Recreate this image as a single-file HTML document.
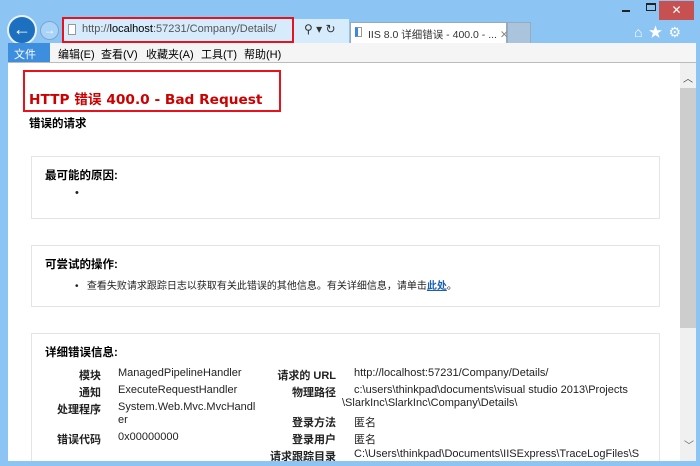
<!DOCTYPE html>
<html><head><meta charset="utf-8"><style>
*{margin:0;padding:0;box-sizing:border-box}
body{width:700px;height:466px;overflow:hidden;background:#8cc4f3;font-family:"Liberation Sans","Noto Sans CJK SC",sans-serif;position:relative;font-size:11px;color:#000}
.abs{position:absolute}
.content{position:absolute;left:8px;top:63px;width:672px;height:398px;background:#fff;overflow:hidden}
.menu{position:absolute;left:8px;top:43px;width:688px;height:20px;background:#f5f5f5;border-bottom:1px solid #bbb;font-size:11px}
.menu span{position:absolute;top:3px}
.box{position:absolute;left:23px;width:629px;border:1px solid #e4e4e4;background:#fff}
.box h3{position:absolute;left:13px;font-size:11.5px;font-weight:bold}
.t{position:absolute;font-size:11px;white-space:nowrap;color:#222}
.b{font-weight:bold;text-align:right}
</style></head><body>
<div class="abs" style="left:622px;top:10px;width:8px;height:2px;background:#222"></div>
<div class="abs" style="left:646px;top:3px;width:10px;height:8px;border:1px solid #222;border-top-width:2px"></div>
<div class="abs" style="left:659px;top:1px;width:35px;height:19px;background:#c75050;color:#fff;text-align:center;font-size:12px;line-height:18px">✕</div>
<div class="abs" style="left:7px;top:15px;width:30px;height:30px;border-radius:50%;background:#1d6fc0;border:2px solid #e8f2fb;color:#fff;font-size:18px;line-height:24px;text-align:center;font-weight:bold">←</div>
<div class="abs" style="left:40px;top:21px;width:19px;height:19px;border-radius:50%;border:1px solid #7aa6d0;background:#a9d3f7;color:#fff;font-size:12px;line-height:16px;text-align:center">→</div>
<div class="abs" style="left:62px;top:17px;width:232px;height:26px;border:2px solid #e8111c;background:#d6ebfc"></div>
<div class="abs" style="left:68px;top:24px;width:8px;height:11px;border:1px solid #999;background:#fff"></div>
<div class="abs" style="left:82px;top:23px;font-size:11px;color:#555">http://<span style="color:#000">localhost</span>:57231/Company/Details/</div>
<div class="abs" style="left:294px;top:19px;width:55px;height:24px;background:#d6ebfc"></div>
<div class="abs" style="left:304px;top:22px;font-size:12px;color:#333">⚲ ▾ ↻</div>
<div class="abs" style="left:350px;top:22px;width:157px;height:22px;background:#fff;border:1px solid #9ab"></div>
<div class="abs" style="left:355px;top:27px;width:7px;height:10px;border:1px solid #999;border-left:3px solid #3a8ad8"></div>
<div class="abs" style="left:368px;top:27px;font-size:10.5px;color:#333">IIS 8.0 详细错误 - 400.0 - ... <span style="color:#888">✕</span></div>
<div class="abs" style="left:507px;top:22px;width:24px;height:22px;background:#a9c4dc;border:1px solid #9ab"></div>
<div class="abs" style="left:634px;top:22px;font-size:14px;color:#fff;letter-spacing:6px">⌂★⚙</div>
<div class="menu">
<span style="left:0;top:0;width:42px;height:19px;background:#3d8ede;color:#fff;padding:3px 0 0 6px">文件(F)</span>
<span style="left:50px">编辑(E)</span><span style="left:93px">查看(V)</span><span style="left:138px">收藏夹(A)</span><span style="left:193px">工具(T)</span><span style="left:236px">帮助(H)</span>
</div>
<div class="content">
<div class="abs" style="left:15px;top:7px;width:258px;height:42px;border:2px solid #e8111c"></div>
<div class="abs" style="left:21px;top:25px;font-family:'DejaVu Sans','Noto Sans CJK SC',sans-serif;font-weight:bold;font-size:13.7px;color:#cc0000">HTTP 错误 400.0 - Bad Request</div>
<div class="abs" style="left:21px;top:52px;font-weight:bold;font-size:11.5px">错误的请求</div>
<div class="box" style="top:93px;height:63px"><h3 style="top:10px">最可能的原因:</h3><div class="t" style="left:43px;top:30px">•</div></div>
<div class="box" style="top:182px;height:62px"><h3 style="top:10px">可尝试的操作:</h3><div class="t" style="left:43px;top:31px;font-size:10px">•&nbsp;&nbsp; 查看失败请求跟踪日志以获取有关此错误的其他信息。有关详细信息，请单击<b style="color:#1a5fb4;text-decoration:underline">此处</b>。</div></div>
<div class="box" style="top:270px;height:140px"><h3 style="top:10px">详细错误信息:</h3>
<div class="t b" style="left:20px;width:49px;top:33px">模块</div><div class="t" style="left:86px;top:33px">ManagedPipelineHandler</div>
<div class="t b" style="left:20px;width:49px;top:50px">通知</div><div class="t" style="left:86px;top:50px">ExecuteRequestHandler</div>
<div class="t b" style="left:20px;width:49px;top:67px">处理程序</div><div class="t" style="left:86px;top:67px">System.Web.Mvc.MvcHandl</div><div class="t" style="left:86px;top:80px">er</div>
<div class="t b" style="left:20px;width:49px;top:97px">错误代码</div><div class="t" style="left:86px;top:97px">0x00000000</div>
<div class="t b" style="left:230px;width:74px;top:33px">请求的 URL</div><div class="t" style="left:322px;top:33px">http://localhost:57231/Company/Details/</div>
<div class="t b" style="left:230px;width:74px;top:50px">物理路径</div><div class="t" style="left:322px;top:50px">c:\users\thinkpad\documents\visual studio 2013\Projects</div><div class="t" style="left:310px;top:63px">\SlarkInc\SlarkInc\Company\Details\</div>
<div class="t b" style="left:230px;width:74px;top:80px">登录方法</div><div class="t" style="left:322px;top:80px">匿名</div>
<div class="t b" style="left:230px;width:74px;top:97px">登录用户</div><div class="t" style="left:322px;top:97px">匿名</div>
<div class="t b" style="left:230px;width:74px;top:114px">请求跟踪目录</div><div class="t" style="left:322px;top:114px">C:\Users\thinkpad\Documents\IISExpress\TraceLogFiles\S</div>
</div>
</div>
<div class="abs" style="left:680px;top:63px;width:16px;height:398px;background:#f0f0f0"></div>
<div class="abs" style="left:680px;top:88px;width:16px;height:240px;background:#cdcdcd"></div>
<div class="abs" style="left:683px;top:70px;font-size:10px;color:#444">︿</div>
<div class="abs" style="left:684px;top:437px;font-size:10px;color:#666">﹀</div>
</body></html>
